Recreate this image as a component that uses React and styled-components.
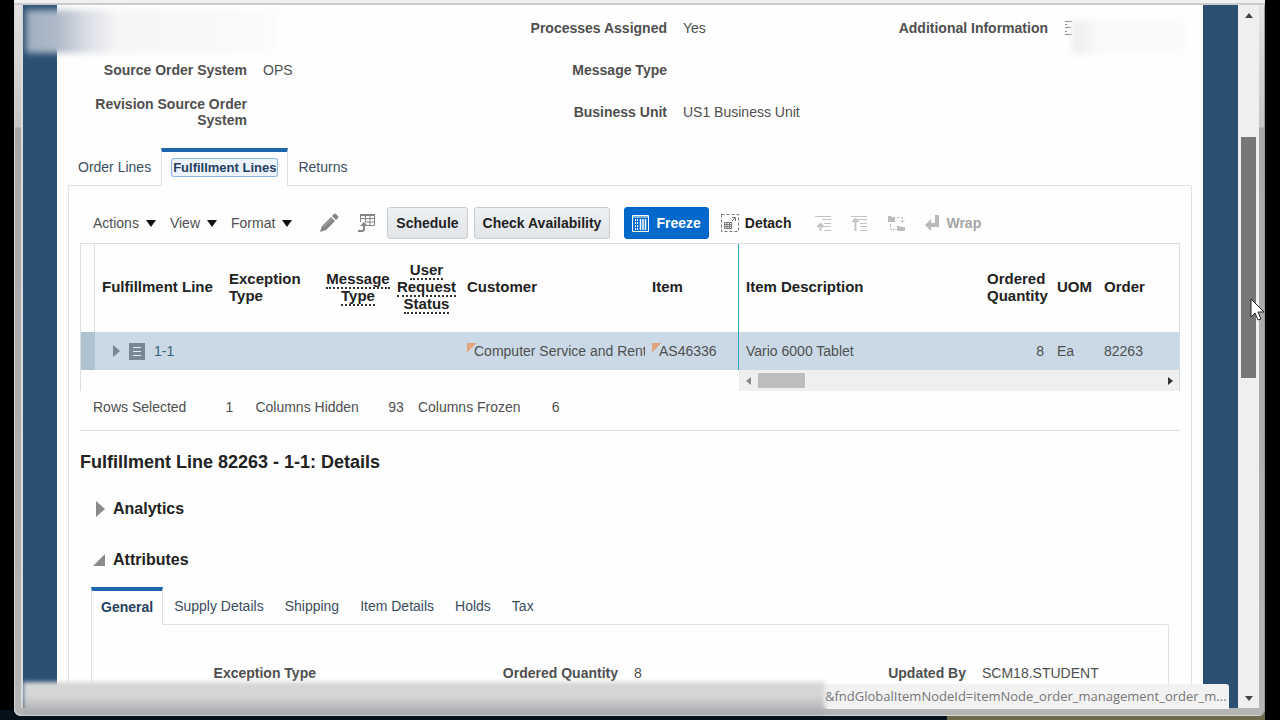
import React from "react";
import styled, { createGlobalStyle, css } from "styled-components";

const Global = createGlobalStyle`
  *, *::before, *::after { box-sizing: border-box; }
  html, body { margin: 0; background: #000; }
  body { font: 14px/16px "Liberation Sans", Arial, sans-serif; color: #4f4f4f; }
  h2, h3, dl, dd, dt, p { margin: 0; }
  button { font: inherit; color: inherit; background: none; border: 0; padding: 0; cursor: pointer; }
  svg { display: block; flex: none; }
`;

const Desktop = styled.div`
  height: 100vh;
  padding: 0 15px 4px 14px;
  background: linear-gradient(90deg, #06121b 0 74%, #6b6a4c 74% 98.8%, #000 98.8%) bottom / 100% 10px no-repeat #000;
`;

const Window = styled.div`
  position: relative;
  display: flex;
  flex-direction: column;
  height: 100%;
  padding: 0 6px 8px 9px;
  overflow: hidden;
  border-radius: 0 0 7px 7px;
  background: linear-gradient(180deg, #e4e4e4 0, #c4c4c4 127px, #a9a6a8 128px, #b5b5b5 100%);
  box-shadow: inset 1px -1px 0 #d8d4d6, inset -1px 0 0 #999;
`;

const ToolbarEdge = styled.div`
  flex: none;
  height: 5px;
  margin: 0 -6px 0 -9px;
  background: #f0f0f0;
  border-bottom: 2px solid #cbcbcb;
`;

const Viewport = styled.div`
  display: flex;
  flex: 1;
  min-height: 0;
  box-shadow: -2px 0 0 #dcdcdc;
`;

const Page = styled.div`
  flex: 1;
  min-width: 0;
  padding: 0 35px 0 34px;
  overflow: hidden;
  background: #2c5074;
`;

const Sheet = styled.main`
  min-height: 100%;
  padding: 2px 11px 0;
  background: #fefefe;
`;

const Summary = styled.dl`
  display: grid;
  grid-template-columns: 179px 238fr 150px 199fr 150px 139fr;
  grid-auto-rows: 42px;
  column-gap: 16px;
  align-items: center;
  margin-right: -11px;
`;

const Label = styled.dt`
  font-weight: bold;
  text-align: right;
  white-space: ${(p) => (p.$wrap ? "normal" : "nowrap")};
`;

const Value = styled.dd``;

const Tabs = styled.div`
  display: flex;
  gap: ${(p) => p.$gap ?? 0}px;
  height: 37px;
  margin-top: ${(p) => p.$top}px;
  color: #3b4d60;
`;

const Tab = styled.button`
  position: relative;
  padding: 0 10px;
  white-space: nowrap;
  ${(p) =>
    p.$active &&
    css`
      height: 38px;
      padding: 0 ${p.$pad}px 3px;
      border: 1px solid #dfe3e7;
      border-top: 4px solid #1d66ac;
      border-bottom: 0;
      background: #fefefe;
      color: #25405f;
      font-weight: bold;
      z-index: 1;
    `}
`;

const FocusRing = styled.span`
  display: block;
  padding: 0 1px;
  border-radius: 2px;
  font-size: 13px;
  line-height: 17px;
  background: #edf4fd;
  box-shadow: 0 0 0 1px #8db4e4;
`;

const Panel = styled.section`
  border: 1px solid #dfe3e7;
  border-radius: 0 2px 0 0;
  padding: ${(p) => p.$pad};
`;

const Toolbar = styled.div`
  display: flex;
  align-items: center;
  height: 32px;
  margin-bottom: 4px;
  padding-left: 13px;
`;

const Menus = styled.div`
  display: flex;
  gap: 14px;
  margin-right: 27px;
`;

const MenuButton = styled.button`
  display: flex;
  align-items: center;
  gap: 7px;
`;

const IconButton = styled.button`
  margin-right: ${(p) => p.$gap}px;
`;

const PushButton = styled.button`
  display: flex;
  align-items: center;
  gap: 7px;
  height: 32px;
  margin-right: ${(p) => p.$gap}px;
  padding: 0 ${(p) => (p.$primary ? 7 : 8)}px;
  border: 1px solid ${(p) => (p.$primary ? "#0067c5" : "#c9cdd1")};
  border-radius: 3px;
  background: ${(p) => (p.$primary ? "#0069cb" : "linear-gradient(#eef1f3, #e2e5e8)")};
  color: ${(p) => (p.$primary ? "#fff" : "#222")};
  font-weight: bold;
  white-space: nowrap;
`;

const FlatButton = styled.button`
  display: flex;
  align-items: center;
  gap: 6px;
  margin-right: 24px;
  color: ${(p) => (p.disabled ? "#a5a5a5" : "#222")};
  font-weight: bold;
`;

const TableFrame = styled.div`
  border: 1px solid #d9dee2;
  border-bottom: 0;
`;

const Table = styled.table`
  width: 100%;
  table-layout: fixed;
  border-collapse: separate;
  border-spacing: 0;
`;

const Head = styled.th`
  height: 88px;
  padding: ${(p) => (p.$align === "center" ? "0 0 3px" : "0 0 3px 7px")};
  text-align: ${(p) => p.$align || "left"};
  color: #222;
  font-size: 15px;
  line-height: 17px;
  white-space: nowrap;
  border-right: ${(p) => (p.$freeze ? "1px solid #2fa9b5" : p.$rule ? "1px solid #d9dee2" : 0)};
`;

const Hint = styled.span`
  border-bottom: 2px dotted #333;
`;

const Cell = styled.td`
  height: 38px;
  padding: 0 ${(p) => p.$right ?? 0}px 0 7px;
  overflow: hidden;
  white-space: nowrap;
  text-align: ${(p) => p.$align || "left"};
  background: ${(p) => (p.$gutter ? "#adc3cf" : "#cbd9e6")};
  border-right: ${(p) => (p.$freeze ? "1px solid #2fa9b5" : 0)};
`;

const LineCell = styled.div`
  display: flex;
  align-items: center;
  gap: 9px;
  padding-left: 11px;
  color: #33627f;
`;

const Flagged = styled.div`
  display: flex;
  align-items: center;
  height: 20px;
  padding-left: 7px;
  overflow: hidden;
  background: linear-gradient(135deg, #e3a47c 0 7px, transparent 7px) no-repeat 0 2px / 11px 11px;
`;

const HScroll = styled.div`
  display: flex;
  align-items: center;
  height: 21px;
  margin-left: 658px;
  padding: 0 6px 0 7px;
  background: #efefef;
`;

const HThumb = styled.div`
  width: 47px;
  height: 15px;
  margin: 0 auto 0 7px;
  background: #bdbdbd;
`;

const Totals = styled.dl`
  display: flex;
  height: 40px;
  align-items: center;
  padding: 0 13px 7px;
  border-bottom: 1px solid #d6dce0;
`;

const TotalValue = styled.dd`
  width: ${(p) => p.$w}px;
  text-align: right;
  margin-right: ${(p) => p.$gap}px;
`;

const Title = styled.h2`
  margin-top: 20px;
  color: #222;
  font-size: 18px;
  line-height: 22px;
`;

const Disclosure = styled.h3`
  margin-top: ${(p) => p.$top}px;
  color: #222;
  font-size: 16px;
  line-height: 20px;
`;

const DisclosureButton = styled.button`
  display: flex;
  align-items: center;
  gap: 8px;
  padding-left: 13px;
  font-weight: bold;
`;

const Inset = styled.div`
  margin: 0 11px;
`;

const Details = styled.dl`
  display: grid;
  grid-template-columns: 224px 120fr 150px 166fr 150px 186fr;
  column-gap: 16px;
`;

const ScrollTrack = styled.div`
  display: flex;
  flex-direction: column;
  align-items: center;
  width: 21px;
  padding: 8px 0 7px;
  background: #efefef;
`;

const ThumbArea = styled.div`
  flex: 1;
  width: 15px;
  padding: 119px 0 0;
`;

const VThumb = styled.div`
  height: 241px;
  background: #777;
`;

const Smudge = styled.div`
  position: absolute;
  pointer-events: none;
  left: ${(p) => p.$left}px;
  top: ${(p) => p.$top}px;
  width: ${(p) => p.$w}px;
  height: ${(p) => p.$h}px;
  background: ${(p) => p.$fill};
  filter: blur(3px);
`;

const StatusBar = styled.div`
  position: absolute;
  left: 9px;
  right: 0;
  bottom: 0;
  display: flex;
  align-items: flex-start;
  height: 34px;
  pointer-events: none;
`;

const StatusBlur = styled.div`
  width: 802px;
  flex: none;
  height: 32px;
  background: linear-gradient(#d6d6d6 0 45%, #a6a7ab);
  filter: blur(2px);
`;

const StatusLink = styled.div`
  min-width: 404px;
  height: 25px;
  margin-top: 2px;
  border-radius: 0 3px 0 0;
  background: #f2f2f2;
  color: #777;
  font: 13px/25px "Open Sans", "Noto Sans", sans-serif;
  white-space: nowrap;
`;

const Cursor = styled.svg`
  position: absolute;
  left: 1236px;
  top: 298px;
`;

const Shape = ({ d, w = 10, h = 7, fill = "#111" }) => (
  <svg width={w} height={h} viewBox={`0 0 ${w} ${h}`} fill={fill} aria-hidden="true"><path d={d} /></svg>
);

const Pencil = () => (
  <svg width="20" height="20" viewBox="0 0 20 20" fill="#858585" aria-hidden="true">
    <path d="M1 19l2-6 9-9 4 4-9 9zM13 3l2-2q1-1 2 0l2 2q1 1 0 2l-2 2z" />
    <path d="M4 14l9-8" stroke="#b5b5b5" />
  </svg>
);

const Export = () => (
  <svg width="18" height="20" viewBox="0 0 18 20" fill="none" stroke="#858585" aria-hidden="true">
    <path d="M3.500 9V1.500h14v11H10M3.500 5.500h14M8 9h9.500M8.500 2v7M13 2v10.500" />
    <path d="M3 1h15v2H3z" fill="#858585" stroke="none" />
    <path d="M1 18h4q2 0 2-2v-4" strokeWidth="2" />
    <path d="M3 13l4-4 4 4z" fill="#858585" stroke="none" />
  </svg>
);

const FreezeIcon = () => (
  <svg width="17" height="17" viewBox="0 0 17 17" fill="none" stroke="#fff" aria-hidden="true">
    <path d="M.5.5h16v16H.5zM1 2h15" />
    <path d="M3.500 4v11M5.500 4v11" strokeDasharray="2 1" />
    <path d="M8.500 4v11M11 4v11M13.500 4v11" strokeWidth="1.500" />
  </svg>
);

const DetachIcon = () => (
  <svg width="18" height="18" viewBox="0 0 18 18" fill="none" stroke="#777" aria-hidden="true">
    <path d="M.5.5h17v17H.5z" strokeDasharray="3 2" />
    <path d="M3.500 8.500h7v6h-7zM3.500 10.500h7M3.500 12.500h7M6 9v5M8.500 9v5M11 7l3-3M11 3.500h3.500V7" />
  </svg>
);

const IndentIcon = ({ top }) => (
  <svg width="17" height="17" viewBox="0 0 17 17" fill="none" stroke="#c3c3c3" aria-hidden="true">
    <path d="M0 1.500h16M7 4.500h9M9 8.500h7M9 11.500h7M9 15.500h7" />
    {top ? <path d="M4.500 16V4M1.500 7l3-3 3 3" strokeWidth="2" /> : <path d="M5.500 16V9M2.500 12l3-3 3 3" strokeWidth="2" />}
  </svg>
);

const TreeIcon = () => (
  <svg width="17" height="17" viewBox="0 0 17 17" fill="#bdbdbd" aria-hidden="true">
    <path d="M0 1h3l1 1h3v5H0zM9 11h3l1 1h4v4H9z" />
    <path d="M2.500 9v5.500h5M9 2.500h5.500V7M12.500 5.500l2 2 2-2" fill="none" stroke="#bdbdbd" strokeDasharray="3 1" />
  </svg>
);

const WrapIcon = () => (
  <svg width="15" height="16" viewBox="0 0 15 16" fill="#b9b9b9" aria-hidden="true">
    <path d="M10 0h4v12H6v4L0 10l6-6v4h4z" />
  </svg>
);

const RowIcon = () => (
  <svg width="16" height="17" viewBox="0 0 16 17" aria-hidden="true">
    <path d="M0 0h16v17H0z" fill="#788791" />
    <path d="M4 4.500h8M4 8.500h8M4 12.500h8" stroke="#e3edf4" />
  </svg>
);

const columns = [14, 127, 101, 70, 67, 185, 94, null, 70, 47, 82];

export default function App() {
  return (
    <>
      <Global />
      <Desktop>
        <Window>
          <ToolbarEdge />
          <Viewport>
            <Page>
              <Sheet>
                <Summary>
                  <Label /><Value />
                  <Label>Processes Assigned</Label><Value>Yes</Value>
                  <Label>Additional Information</Label>
                  <Value><Shape w={8} h={14} fill="#888" d="M1 0h7v1H1zM1 3h2v1H1zM1 6h6v1H1zM1 10h2v1H1zM1 13h7v1H1z" /></Value>
                  <Label>Source Order System</Label><Value>OPS</Value>
                  <Label>Message Type</Label><Value />
                  <Label /><Value />
                  <Label $wrap>Revision Source Order System</Label><Value />
                  <Label>Business Unit</Label><Value>US1 Business Unit</Value>
                </Summary>
                <Tabs $top={15} role="tablist">
                  <Tab role="tab">Order Lines</Tab>
                  <Tab role="tab" $active $pad={10} aria-selected="true"><FocusRing>Fulfillment Lines</FocusRing></Tab>
                  <Tab role="tab">Returns</Tab>
                </Tabs>
                <Panel $pad="21px 11px 0">
                  <Toolbar>
                    <Menus>
                      {["Actions", "View", "Format"].map((name) => (
                        <MenuButton key={name}>{name}<Shape d="M0 0h10L5 7z" /></MenuButton>
                      ))}
                    </Menus>
                    <IconButton $gap={18} aria-label="Edit"><Pencil /></IconButton>
                    <IconButton $gap={12} aria-label="Export"><Export /></IconButton>
                    <PushButton $gap={6}>Schedule</PushButton>
                    <PushButton $gap={14}>Check Availability</PushButton>
                    <PushButton $gap={12} $primary><FreezeIcon />Freeze</PushButton>
                    <FlatButton><DetachIcon />Detach</FlatButton>
                    <IconButton $gap={19} aria-label="Go up" disabled><IndentIcon /></IconButton>
                    <IconButton $gap={20} aria-label="Go to top" disabled><IndentIcon top /></IconButton>
                    <IconButton $gap={20} aria-label="Show as top" disabled><TreeIcon /></IconButton>
                    <FlatButton disabled><WrapIcon />Wrap</FlatButton>
                  </Toolbar>
                  <TableFrame>
                    <Table>
                      <colgroup>{columns.map((w, i) => <col key={i} style={w ? { width: w } : undefined} />)}</colgroup>
                      <thead>
                        <tr>
                          <Head $rule />
                          <Head>Fulfillment Line</Head>
                          <Head>Exception<br />Type</Head>
                          <Head $align="center"><Hint>Message</Hint><br /><Hint>Type</Hint></Head>
                          <Head $align="center"><Hint>User</Hint><br /><Hint>Request</Hint><br /><Hint>Status</Hint></Head>
                          <Head>Customer</Head>
                          <Head $freeze>Item</Head>
                          <Head>Item Description</Head>
                          <Head>Ordered<br />Quantity</Head>
                          <Head>UOM</Head>
                          <Head>Order</Head>
                        </tr>
                      </thead>
                      <tbody>
                        <tr>
                          <Cell $gutter />
                          <Cell><LineCell><Shape w={7} h={12} fill="#788791" d="M0 0l7 6-7 6z" /><RowIcon />1-1</LineCell></Cell>
                          <Cell /><Cell /><Cell />
                          <Cell><Flagged>Computer Service and Rental</Flagged></Cell>
                          <Cell $freeze><Flagged>AS46336</Flagged></Cell>
                          <Cell>Vario 6000 Tablet</Cell>
                          <Cell $align="right" $right={6}>8</Cell>
                          <Cell>Ea</Cell>
                          <Cell>82263</Cell>
                        </tr>
                      </tbody>
                    </Table>
                    <HScroll>
                      <Shape w={5} h={8} fill="#888" d="M5 0v8L0 4z" />
                      <HThumb />
                      <Shape w={5} h={8} fill="#333" d="M0 0l5 4-5 4z" />
                    </HScroll>
                  </TableFrame>
                  <Totals>
                    <dt>Rows Selected</dt><TotalValue $w={47} $gap={22}>1</TotalValue>
                    <dt>Columns Hidden</dt><TotalValue $w={45} $gap={14}>93</TotalValue>
                    <dt>Columns Frozen</dt><TotalValue $w={39} $gap={0}>6</TotalValue>
                  </Totals>
                  <Title>Fulfillment Line 82263 - 1-1: Details</Title>
                  <Disclosure $top={26}>
                    <DisclosureButton aria-expanded="false">
                      <Shape w={12} h={16} fill="#8a8a8a" d="M3 0l9 8-9 8z" />Analytics
                    </DisclosureButton>
                  </Disclosure>
                  <Disclosure $top={31}>
                    <DisclosureButton aria-expanded="true">
                      <Shape w={12} h={12} fill="#8a8a8a" d="M12 0v12H0z" />Attributes
                    </DisclosureButton>
                  </Disclosure>
                  <Inset>
                    <Tabs $top={17} $gap={1} role="tablist">
                      <Tab role="tab" $active $pad={9} aria-selected="true">General</Tab>
                      {["Supply Details", "Shipping", "Item Details", "Holds", "Tax"].map((name) => (
                        <Tab role="tab" key={name}>{name}</Tab>
                      ))}
                    </Tabs>
                    <Panel $pad="40px 0 60px">
                      <Details>
                        <Label>Exception Type</Label><Value />
                        <Label>Ordered Quantity</Label><Value>8</Value>
                        <Label>Updated By</Label><Value>SCM18.STUDENT</Value>
                      </Details>
                    </Panel>
                  </Inset>
                </Panel>
              </Sheet>
            </Page>
            <ScrollTrack>
              <Shape w={8} h={5} fill="#444" d="M4 0l4 5H0z" />
              <ThumbArea><VThumb /></ThumbArea>
              <Shape w={8} h={5} fill="#444" d="M0 0h8L4 5z" />
            </ScrollTrack>
          </Viewport>
          <Smudge $left={12} $top={10} $w={250} $h={43} $fill="linear-gradient(90deg, #9fb0c1 0, #afbac8 32px, #d9dde4 60px, #f5f5f6 90px, #fbfbfb 100%)" />
          <Smudge $left={1058} $top={20} $w={113} $h={34} $fill="linear-gradient(90deg, #ececec, #fafafa 28px)" />
          <StatusBar>
            <StatusBlur />
            <StatusLink>&amp;fndGlobalItemNodeId=itemNode_order_management_order_m...</StatusLink>
          </StatusBar>
          <Cursor width="16" height="24" viewBox="0 0 16 24" aria-hidden="true">
            <path d="M1 1v18l4-4 3 7 3-1-3-7h6z" fill="#fff" stroke="#222" />
          </Cursor>
        </Window>
      </Desktop>
    </>
  );
}
